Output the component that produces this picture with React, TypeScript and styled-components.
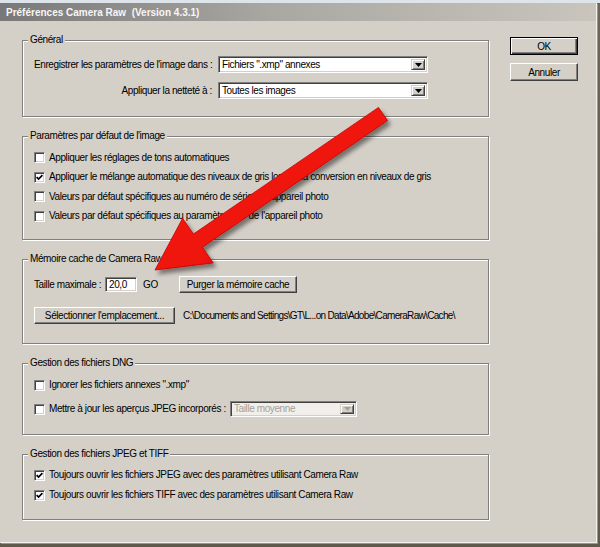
import React from 'react'
import styled, {createGlobalStyle, css} from 'styled-components'

const GlobalStyle = createGlobalStyle`
  html, body {
    margin: 0;
    padding: 0;
  }
  body {
    width: 600px;
    height: 547px;
    overflow: hidden;
    font-family: "Liberation Sans", Arial, sans-serif;
    color: #000;
  }
`

const Desktop = styled.div`
  position: relative;
  width: 600px;
  height: 547px;
  box-sizing: border-box;
  padding-top: 3px;
  background: linear-gradient(180deg, #dde4ea 0, #dde4ea 3px, #6b6657 3px, #5f5a4c 100%);
`

const Window = styled.div`
  box-sizing: border-box;
  width: 597px;
  height: 540px;
  display: flex;
  flex-direction: column;
  background: #d4d0c8;
  border-right: 1px solid #f2f0ec;
  border-bottom: 1px solid #f2f0ec;
  box-shadow: 1px 1px 0 #9a978f;
`

const TitleBar = styled.div`
  height: 18px;
  flex: none;
  display: flex;
  align-items: center;
  padding-left: 6px;
  background: linear-gradient(90deg, #787878 0%, #a9a7a2 45%, #c9c5bd 100%);
  color: #f6f6f6;
  font-weight: bold;
  font-size: 10px;
  white-space: pre;
`

const Body = styled.div`
  display: flex;
  padding: 16px 0 0 22px;
`

const GroupColumn = styled.div`
  width: 467px;
  padding-top: 3px;
  display: flex;
  flex-direction: column;
  gap: 19px;
`

const ButtonColumn = styled.div`
  margin-left: 21px;
  display: flex;
  flex-direction: column;
  gap: 8px;
`

const Group = styled.div<{$pt: number; $pb: number}>`
  position: relative;
  border: 1px solid #808080;
  box-shadow: inset 1px 1px 0 #fff, 1px 1px 0 #fff;
  padding: ${p => p.$pt}px 10px ${p => p.$pb}px 11px;
`

const Legend = styled.span`
  position: absolute;
  top: -7px;
  left: 5px;
  padding: 0 2px;
  background: #d4d0c8;
  font-size: 10px;
  letter-spacing: -0.4px;
  line-height: 12px;
  white-space: nowrap;
`

const Text = styled.span<{$muted?: boolean}>`
  font-size: 10px;
  letter-spacing: -0.4px;
  line-height: 12px;
  white-space: nowrap;
  color: ${p => (p.$muted ? '#a3a09a' : '#000')};
`

const Stack = styled.div<{$gap: number}>`
  display: flex;
  flex-direction: column;
  gap: ${p => p.$gap}px;
`

const Row = styled.div<{$h?: number}>`
  display: flex;
  align-items: center;
  height: ${p => p.$h ?? 13}px;
`

const FieldGrid = styled.div`
  display: grid;
  grid-template-columns: 184px 210px;
  grid-auto-rows: 17px;
  row-gap: 9px;
  align-items: center;
`

const FieldLabel = styled(Text)`
  text-align: right;
  padding-right: 6px;
`

const sunken = css`
  box-sizing: border-box;
  border: 1px solid;
  border-color: #808080 #fff #fff #808080;
  box-shadow: inset 1px 1px 0 #404040, inset -1px -1px 0 #d4d0c8;
`

const Box = styled.span`
  ${sunken};
  width: 11px;
  height: 11px;
  flex: none;
  background: #fff;
  display: flex;
  align-items: center;
  justify-content: center;
  margin-right: 4px;
`

const Combo = styled.div<{$w: number; $h: number; $disabled?: boolean}>`
  ${sunken};
  width: ${p => p.$w}px;
  height: ${p => p.$h}px;
  display: flex;
  align-items: center;
  padding: 2px 2px 2px 3px;
  background: ${p => (p.$disabled ? '#f1efeb' : '#fff')};
`

const ComboText = styled(Text)`
  flex: 1;
`

const DropButton = styled.span`
  box-sizing: border-box;
  width: 14px;
  height: 100%;
  flex: none;
  display: flex;
  align-items: center;
  justify-content: center;
  background: #d4d0c8;
  border: 1px solid;
  border-color: #d4d0c8 #404040 #404040 #d4d0c8;
  box-shadow: inset 1px 1px 0 #fff, inset -1px -1px 0 #808080;
`

const TextInput = styled.div`
  ${sunken};
  width: 32px;
  height: 15px;
  background: #fff;
  display: flex;
  align-items: center;
  padding-left: 3px;
`

const Button = styled.button<{$w: number; $h?: number; $default?: boolean}>`
  box-sizing: border-box;
  width: ${p => p.$w}px;
  height: ${p => p.$h ?? 17}px;
  padding: 0;
  font-family: inherit;
  font-size: 10px;
  letter-spacing: -0.4px;
  color: #000;
  background: #d4d0c8;
  border: 1px solid;
  ${p =>
    p.$default
      ? css`
          border-color: #000;
          box-shadow: inset 1px 1px 0 #fff, inset -1px -1px 0 #404040, inset -2px -2px 0 #808080;
        `
      : css`
          border-color: #fff #404040 #404040 #fff;
          box-shadow: inset -1px -1px 0 #808080;
        `}
`

const MaxLabel = styled(Text)`
  width: 71px;
  flex: none;
`

const Unit = styled(Text)`
  width: 36px;
  margin-left: 6px;
  flex: none;
`

const PathText = styled(Text)`
  margin-left: 8px;
  letter-spacing: -0.68px;
`

const SelectLabel = styled(Text)`
  width: 181px;
  flex: none;
`

const Overlay = styled.svg`
  position: absolute;
  left: 0;
  top: 0;
  pointer-events: none;
`

const Check = () => (
  <svg width="7" height="7" viewBox="0 0 7 7">
    <path d="M0.6 3.1 L2.6 5.1 L6.4 1.2" stroke="#000" strokeWidth="1.7" fill="none" />
  </svg>
)

const Triangle = ({disabled}: {disabled?: boolean}) => (
  <svg width="7" height="4" viewBox="0 0 7 4">
    <polygon points="0,0 7,0 3.5,4" fill={disabled ? '#a3a09a' : '#000'} />
  </svg>
)

function CheckRow({label, checked, h}: {label: string; checked?: boolean; h?: number}) {
  return (
    <Row $h={h}>
      <Box>{checked && <Check />}</Box>
      <Text>{label}</Text>
    </Row>
  )
}

function Select({value, w, h, disabled}: {value: string; w: number; h: number; disabled?: boolean}) {
  return (
    <Combo $w={w} $h={h} $disabled={disabled}>
      <ComboText $muted={disabled}>{value}</ComboText>
      <DropButton>
        <Triangle disabled={disabled} />
      </DropButton>
    </Combo>
  )
}

// big red annotation arrow drawn over the dialog
function Arrow() {
  return (
    <Overlay width="600" height="547" viewBox="0 0 600 547">
      <defs>
        <filter id="arrowShadow" x="-20%" y="-20%" width="140%" height="140%">
          <feDropShadow dx="3" dy="4" stdDeviation="2" floodColor="#000" floodOpacity="0.45" />
        </filter>
        <linearGradient id="arrowFill" x1="0" y1="0" x2="1" y2="1">
          <stop offset="0" stopColor="#ff2a1a" />
          <stop offset="1" stopColor="#e00000" />
        </linearGradient>
      </defs>
      <polygon
        points="155,270 213.2,262.9 202.4,247.2 387.5,120.6 378.5,107.4 193.4,234 182.6,218.3"
        fill="url(#arrowFill)"
        stroke="#c40000"
        strokeWidth="0.8"
        strokeLinejoin="round"
        filter="url(#arrowShadow)"
      />
    </Overlay>
  )
}

export default function App() {
  return (
    <Desktop>
      <GlobalStyle />
      <Window>
        <TitleBar>Préférences Camera Raw  (Version 4.3.1)</TitleBar>
        <Body>
          <GroupColumn>
            <Group $pt={15} $pb={17}>
              <Legend>Général</Legend>
              <FieldGrid>
                <FieldLabel>Enregistrer les paramètres de l'image dans :</FieldLabel>
                <Select value={'Fichiers ".xmp" annexes'} w={210} h={17} />
                <FieldLabel>Appliquer la netteté à :</FieldLabel>
                <Select value="Toutes les images" w={210} h={17} />
              </FieldGrid>
            </Group>

            <Group $pt={14} $pb={16.5}>
              <Legend>Paramètres par défaut de l'image</Legend>
              <Stack $gap={6.5}>
                <CheckRow label="Appliquer les réglages de tons automatiques" />
                <CheckRow
                  checked
                  label="Appliquer le mélange automatique des niveaux de gris lors de la conversion en niveaux de gris"
                />
                <CheckRow label="Valeurs par défaut spécifiques au numéro de série de l'appareil photo" />
                <CheckRow label="Valeurs par défaut spécifiques au paramètre ISO de l'appareil photo" />
              </Stack>
            </Group>

            <Group $pt={16} $pb={19}>
              <Legend>Mémoire cache de Camera Raw</Legend>
              <Stack $gap={14}>
                <Row $h={17}>
                  <MaxLabel>Taille maximale :</MaxLabel>
                  <TextInput>
                    <Text>20,0</Text>
                  </TextInput>
                  <Unit>GO</Unit>
                  <Button $w={118}>Purger la mémoire cache</Button>
                </Row>
                <Row $h={17}>
                  <Button $w={141}>Sélectionner l'emplacement...</Button>
                  <PathText>{'C:\\Documents and Settings\\GT\\L...on Data\\Adobe\\CameraRaw\\Cache\\'}</PathText>
                </Row>
              </Stack>
            </Group>

            <Group $pt={14.5} $pb={17}>
              <Legend>Gestion des fichiers DNG</Legend>
              <Stack $gap={9.5}>
                <CheckRow label={'Ignorer les fichiers annexes ".xmp"'} />
                <Row $h={16}>
                  <Box />
                  <SelectLabel>Mettre à jour les aperçus JPEG incorporés :</SelectLabel>
                  <Select value="Taille moyenne" w={127} h={16} disabled />
                </Row>
              </Stack>
            </Group>

            <Group $pt={13.5} $pb={17.5}>
              <Legend>Gestion des fichiers JPEG et TIFF</Legend>
              <Stack $gap={7}>
                <CheckRow checked label="Toujours ouvrir les fichiers JPEG avec des paramètres utilisant Camera Raw" />
                <CheckRow checked label="Toujours ouvrir les fichiers TIFF avec des paramètres utilisant Camera Raw" />
              </Stack>
            </Group>
          </GroupColumn>

          <ButtonColumn>
            <Button $w={68} $h={18} $default>
              OK
            </Button>
            <Button $w={68} $h={18}>
              Annuler
            </Button>
          </ButtonColumn>
        </Body>
      </Window>
      <Arrow />
    </Desktop>
  )
}
